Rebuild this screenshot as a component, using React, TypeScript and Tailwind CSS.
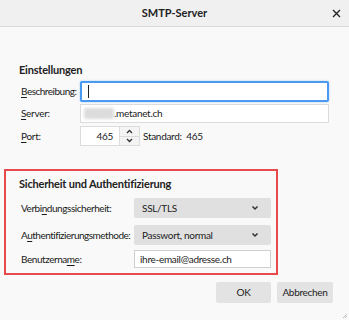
import { ReactNode } from "react";

const font = { fontFamily: "Lato, 'Noto Sans', sans-serif" };

function Chevron() {
  return (
    <svg width="8" height="6" viewBox="0 0 8 6" className="shrink-0" aria-hidden="true">
      <path d="M1.5 1.5 L4 4 L6.5 1.5" fill="none" stroke="#333" strokeWidth="1.5" />
    </svg>
  );
}

function Label({ pre, key_, post, className = "" }: { pre: string; key_: string; post: string; className?: string }) {
  return (
    <span className={className}>
      {pre}
      <span className="underline underline-offset-2">{key_}</span>
      {post}
    </span>
  );
}

function Select({ value }: { value: string }) {
  return (
    <div className="flex h-[20px] w-[137px] shrink-0 items-center justify-between rounded-[2px] bg-[#e0e0e0] pl-[8px] pr-[12px] text-[#222]">
      <span>{value}</span>
      <Chevron />
    </div>
  );
}

function Row({ children }: { children: ReactNode }) {
  return <div className="flex items-center">{children}</div>;
}

export default function App() {
  return (
    <div
      className="flex h-[320px] w-[349px] flex-col overflow-hidden bg-[#f9f9f9] text-[10px] tracking-[-0.3px] text-[#1a1a1a]"
      style={font}
    >
      {/* title bar */}
      <div className="relative flex h-[27px] shrink-0 items-center justify-center border-b border-[#dadada] bg-[#f0f0f0]">
        <span className="text-[11px] font-bold tracking-normal text-[#222]">SMTP-Server</span>
        <svg
          width="9"
          height="9"
          viewBox="0 0 9 9"
          className="absolute right-[8px] top-[9px]"
          aria-hidden="true"
        >
          <path d="M1 1 L8 8 M8 1 L1 8" stroke="#222" strokeWidth="1.3" />
        </svg>
      </div>

      {/* Einstellungen */}
      <div className="mt-[35px] pl-[19px] text-[11px] font-bold leading-[16px] tracking-[-0.2px] text-[#222]">Einstellungen</div>
      <div className="mt-[3px] flex flex-col pl-[21px] pr-[20px]">
        <Row>
          <Label pre="" key_="B" post="eschreibung:" className="w-[59px] shrink-0 tracking-[-0.5px]" />
          <div className="flex h-[21px] flex-1 items-center rounded-[2px] border-2 border-[#4a9af2] bg-white pl-[6px] shadow-[0_0_2px_#9cc7f7]">
            <span className="h-[13px] w-px bg-[#222]" />
          </div>
        </Row>
        <Row>
          <Label pre="" key_="S" post="erver:" className="mt-[2px] w-[59px] shrink-0" />
          <div className="mt-[2px] flex h-[19px] flex-1 items-center border border-[#dcdcdc] bg-white pl-[3px]">
            <span className="h-[11px] w-[30px] rounded-[2px] bg-[#dcdcdc] blur-[1.5px]" />
            <span>.metanet.ch</span>
          </div>
        </Row>
        <Row>
          <Label pre="" key_="P" post="ort:" className="mt-[3px] w-[59px] shrink-0" />
          <div className="mt-[3px] flex h-[20px] items-center">
            <div className="flex h-full w-[40px] items-center justify-end border border-[#dcdcdc] bg-white pr-[6px]">465</div>
            <div className="flex h-full w-[20px] flex-col border border-l-0 border-[#dcdcdc] bg-[#f4f4f4]">
              <div className="flex flex-1 items-center justify-center border-b border-[#dcdcdc]">
                <svg width="7" height="5" viewBox="0 0 7 5" aria-hidden="true">
                  <path d="M1 4 L3.5 1.5 L6 4" fill="none" stroke="#333" strokeWidth="1.3" />
                </svg>
              </div>
              <div className="flex flex-1 items-center justify-center">
                <svg width="7" height="5" viewBox="0 0 7 5" aria-hidden="true">
                  <path d="M1 1 L3.5 3.5 L6 1" fill="none" stroke="#333" strokeWidth="1.3" />
                </svg>
              </div>
            </div>
            <span className="ml-[3px]">Standard:&nbsp;&nbsp;465</span>
          </div>
        </Row>
      </div>

      {/* Sicherheit */}
      <div className="ml-[4px] mt-[23px] flex w-[274px] flex-col border-2 border-[#e8494b] pb-[5px] pl-[15px] pt-[5px]">
        <div className="-ml-[2px] text-[11px] font-bold leading-[16px] tracking-[-0.2px] text-[#222]">
          Sicherheit und Authentifizierung
        </div>
        <div className="mt-[6px] flex items-center">
          <Label pre="Verbi" key_="n" post="dungssicherheit:" className="w-[113px] tracking-[-0.45px]" />
          <Select value="SSL/TLS" />
        </div>
        <div className="mt-[7px] flex items-center">
          <Label pre="A" key_="u" post="thentifizierungsmethode:" className="w-[113px] tracking-[-0.5px]" />
          <Select value="Passwort, normal" />
        </div>
        <div className="mt-[5px] flex items-center">
          <Label pre="Benutzerna" key_="m" post="e:" className="w-[113px] tracking-[-0.45px]" />
          <div className="flex h-[18px] w-[137px] items-center border border-[#cfcfcf] bg-white pl-[5px] text-[#222]">
            ihre-email@adresse.ch
          </div>
        </div>
      </div>

      {/* buttons */}
      <div className="mt-[7px] flex justify-end gap-[6px] pr-[16px]">
        <div className="flex h-[21px] w-[55px] items-center justify-center rounded-[2px] bg-[#e3e3e3] text-[#222]">OK</div>
        <div className="flex h-[21px] w-[56px] items-center justify-center rounded-[2px] bg-[#e3e3e3] text-[#222]">Abbrechen</div>
      </div>

      <div className="mt-auto flex justify-end pb-[1px] pr-[1px]">
        <svg width="6" height="6" viewBox="0 0 6 6" aria-hidden="true">
          <path d="M5 1 L1 5 M5 3 L3 5" stroke="#bbb" strokeWidth="1" />
        </svg>
      </div>
    </div>
  );
}
